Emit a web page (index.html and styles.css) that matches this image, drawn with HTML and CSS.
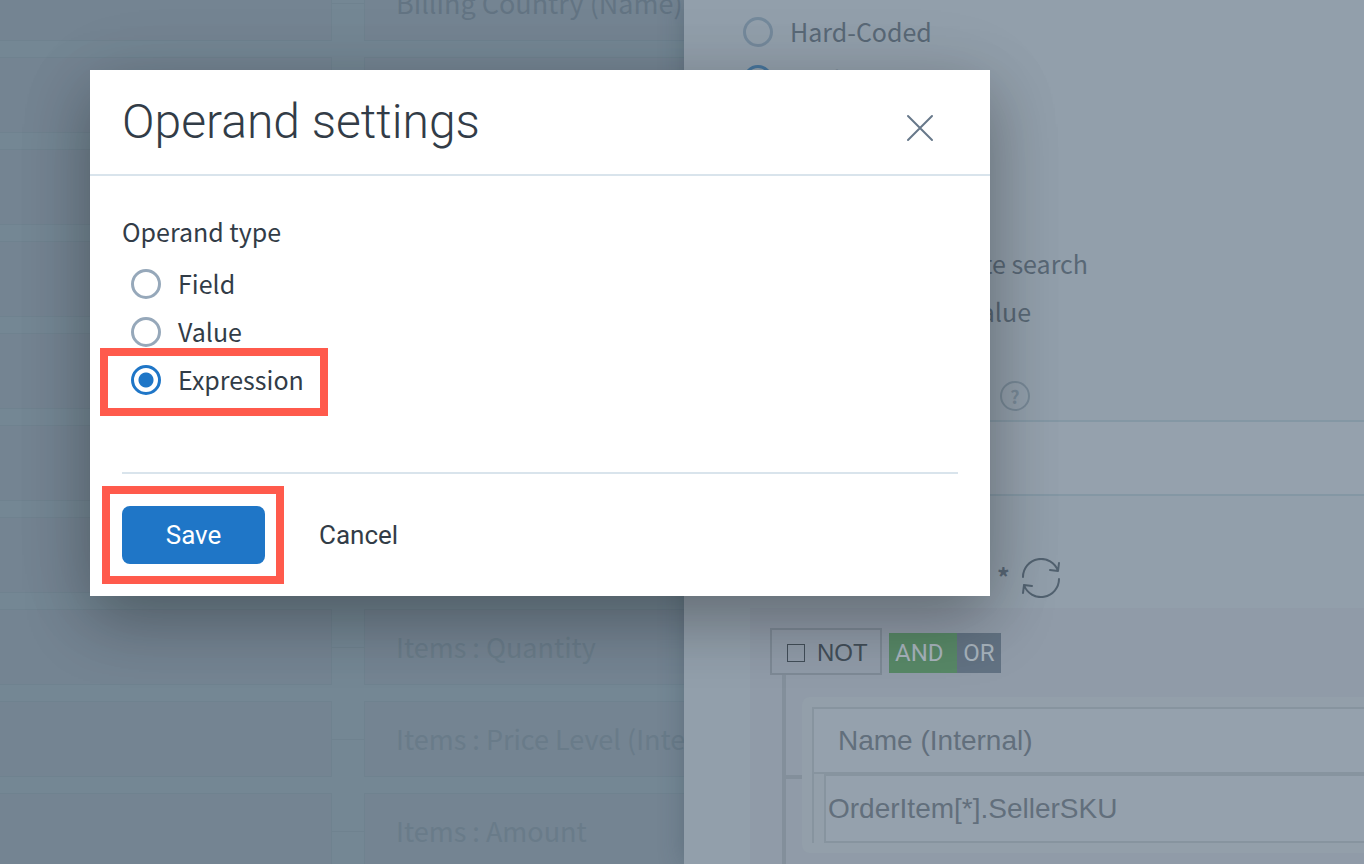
FILE: index.html
```html
<!DOCTYPE html>
<html lang="en">
<head>
    <meta charset="UTF-8">
    <meta name="viewport" content="width=device-width, initial-scale=1.0">
    <title>Operand settings</title>
    <link rel="stylesheet" href="styles.css">
</head>
<body>
    <div class="page">
        <div class="mapping">
            <div class="map-row"><div class="cell"></div><span class="link-line"></span><div class="cell strong">Billing Country (Name)</div></div>
            <div class="map-row"><div class="cell"></div><span class="link-line"></span><div class="cell"></div></div>
            <div class="map-row"><div class="cell"></div><span class="link-line"></span><div class="cell"></div></div>
            <div class="map-row"><div class="cell"></div><span class="link-line"></span><div class="cell"></div></div>
            <div class="map-row"><div class="cell"></div><span class="link-line"></span><div class="cell"></div></div>
            <div class="map-row"><div class="cell"></div><span class="link-line"></span><div class="cell"></div></div>
            <div class="map-row"><div class="cell"></div><span class="link-line"></span><div class="cell"></div></div>
            <div class="map-row"><div class="cell"></div><span class="link-line"></span><div class="cell">Items : Quantity</div></div>
            <div class="map-row"><div class="cell"></div><span class="link-line"></span><div class="cell">Items : Price Level (Internal)</div></div>
            <div class="map-row"><div class="cell"></div><span class="link-line"></span><div class="cell">Items : Amount</div></div>
        </div>

        <div class="panel">
            <div class="panel-options">
                <label class="radio"><input type="radio" name="source"><span>Hard-Coded</span></label>
                <label class="radio"><input type="radio" name="source" checked><span>Lookup</span></label>
            </div>
            <div class="panel-notes">
                <div class="note">Immediate search</div>
                <div class="note short">Null value</div>
            </div>
            <div class="field-label">
                <button class="help" type="button" aria-label="Help">?</button>
            </div>
            <input class="wide-input" type="text" aria-label="Lookup name">
            <div class="criteria-label">
                <span>*</span>
                <button class="refresh" type="button" aria-label="Refresh">
                    <svg width="40" height="40" viewBox="0 0 40 40" fill="none" stroke="currentColor" stroke-width="2" stroke-linecap="round" stroke-linejoin="round">
                        <path d="M2 19A18 18 0 0 1 37 13M38 5L37 13L29 12"/>
                        <path d="M38 21A18 18 0 0 1 3 27M2 35L3 27L11 28"/>
                    </svg>
                </button>
            </div>

            <div class="builder">
                <div class="logic">
                    <label class="not"><input type="checkbox"> NOT</label>
                    <div class="toggle">
                        <button class="and" type="button">AND</button>
                        <button class="or" type="button">OR</button>
                    </div>
                </div>
                <div class="tree">
                    <div class="branch"></div>
                    <div class="rule">
                        <div class="rule-inner">
                            <select class="rule-field" aria-label="Field">
                                <option>Name (Internal)</option>
                            </select>
                            <input class="rule-value" type="text" value="OrderItem[*].SellerSKU" aria-label="Value">
                        </div>
                    </div>
                </div>
            </div>
        </div>
    </div>

    <div class="modal" role="dialog" aria-labelledby="modal-title">
        <div class="modal-header">
            <h1 id="modal-title">Operand settings</h1>
            <button class="close" type="button" aria-label="Close">
                <svg width="28" height="28" viewBox="0 0 28 28" fill="none" stroke="currentColor" stroke-width="2" stroke-linecap="round">
                    <path d="M2 2L26 26M26 2L2 26"/>
                </svg>
            </button>
        </div>
        <div class="modal-body">
            <fieldset>
                <legend>Operand type</legend>
                <label class="radio"><input type="radio" name="operand"><span>Field</span></label>
                <label class="radio"><input type="radio" name="operand"><span>Value</span></label>
                <label class="radio marked"><input type="radio" name="operand" checked><span>Expression</span></label>
            </fieldset>
            <div class="actions">
                <div class="marked save-wrap"><button class="save" type="button">Save</button></div>
                <button class="cancel" type="button">Cancel</button>
            </div>
        </div>
    </div>
</body>
</html>
```
FILE: styles.css
```css
* {
    box-sizing: border-box;
}

body {
    margin: 0;
    height: 100vh;
    overflow: hidden;
    background: #748794;
    font-family: "Noto Sans CJK SC", "Noto Sans", sans-serif;
    font-size: 25px;
    line-height: 36px;
    color: #323c47;
}

button, input, select {
    font: inherit;
    color: inherit;
    margin: 0;
    padding: 0;
    border: none;
    background: none;
}

.page {
    display: grid;
    grid-template-columns: minmax(0, 171fr) minmax(0, 170fr);
    height: 100%;
}

/* mapping rows */
.mapping {
    display: flex;
    flex-direction: column;
    gap: 16px;
    margin-top: -35px;
    overflow: hidden;
    min-width: 0;
}

.map-row {
    display: grid;
    grid-template-columns: 332px 32px 400px;
    align-items: center;
    flex: none;
    height: 76px;
}

.cell {
    height: 76px;
    padding-left: 31px;
    border: 1px solid #6f828f;
    border-left-width: 0;
    background: #748492;
    font-size: 27px;
    line-height: 74px;
    white-space: nowrap;
    color: #697b89;
}

.cell:last-child {
    border-left-width: 1px;
}

.cell.strong {
    color: #637483;
}

.link-line {
    height: 1px;
    background: #6f828f;
}

/* right panel */
.panel {
    position: relative;
    background: #929fab;
    color: #596876;
    box-shadow: 0 0 24px rgba(40, 60, 75, 0.3);
}

.radio {
    position: relative;
    display: flex;
    align-items: center;
    gap: 17px;
    height: 48px;
}

.radio span {
    padding-bottom: 2px;
}

.radio input {
    appearance: none;
    flex: none;
    width: 30px;
    height: 30px;
    border: 3px solid #96a8ba;
    border-radius: 50%;
}

.radio input:checked {
    border-color: #1f76c7;
    background: radial-gradient(circle, #1f76c7 0 7px, transparent 8px);
}

.panel-options {
    padding: 8px 0 0 59px;
}

.panel-options .radio input {
    border-color: #74899b;
}

.panel-options .radio input:checked {
    border-color: #47759c;
}

.panel-notes {
    width: 404px;
    margin-top: 135px;
    text-align: right;
}

.note {
    height: 48px;
    line-height: 48px;
}

.note.short {
    padding-right: 57px;
}

.field-label {
    display: flex;
    height: 85px;
    padding: 46px 0 0 316px;
}

.help {
    width: 30px;
    height: 30px;
    border: 2px solid #778896;
    border-radius: 50%;
    font-size: 18px;
    font-weight: bold;
    line-height: 24px;
    color: #778896;
}

.wide-input {
    display: block;
    width: calc(100% - 66px);
    margin-left: 66px;
    height: 76px;
    border: 2px solid #8497a4;
    border-right: none;
    background: #95a1ad;
}

.criteria-label {
    display: flex;
    align-items: center;
    gap: 11px;
    height: 112px;
    padding: 52px 0 0 313px;
    font-weight: bold;
}

.criteria-label span {
    padding-bottom: 4px;
}

.refresh {
    height: 40px;
    color: #526270;
}

.refresh svg {
    display: block;
}

.builder {
    margin-left: 66px;
    padding: 20px 0 0 20px;
    height: 256px;
    background: #909ba8;
    font-family: "Liberation Sans", Arial, sans-serif;
}

.logic {
    display: flex;
    align-items: flex-end;
    gap: 7px;
    font-size: 24px;
    line-height: 40px;
}

.not {
    display: flex;
    align-items: center;
    gap: 12px;
    width: 112px;
    height: 47px;
    padding: 2px 0 0 15px;
    border: 2px solid #7d8995;
    color: #424e59;
}

.not input {
    appearance: none;
    width: 18px;
    height: 18px;
    border: 1px solid #424e59;
}

.toggle {
    display: flex;
    padding-bottom: 2px;
    font-family: Roboto, sans-serif;
    color: #a7b3bc;
}

.toggle button {
    height: 40px;
    padding: 0 6px;
}

.toggle .and {
    width: 68px;
    text-align: left;
    background: #588867;
}

.toggle .or {
    width: 44px;
    background: #627283;
}

.tree {
    display: flex;
    height: 189px;
    margin-left: 12px;
    border-left: 4px solid #838f9b;
}

.branch {
    width: 16px;
    height: 4px;
    margin-top: 100px;
    background: #838f9b;
}

.rule {
    flex: 1;
    height: 156px;
    margin-top: 22px;
    padding: 10px 0 0 10px;
    border-radius: 8px 0 0 8px;
    background: #939faa;
    font-size: 28px;
    color: #626f7c;
}

.rule-inner {
    height: 136px;
    border-top: 2px solid #87949f;
    border-left: 2px solid #87949f;
}

.rule-field {
    appearance: none;
    display: block;
    width: 100%;
    height: 65px;
    padding-left: 24px;
    background: #95a1ad;
    border-bottom: 2px solid #87949f;
}

.rule-value {
    display: block;
    width: calc(100% - 10px);
    height: 69px;
    margin-left: 10px;
    padding-left: 2px;
    border: 2px solid #87949f;
    border-right: none;
    background: #95a1ad;
}

/* modal */
.modal {
    position: absolute;
    top: 70px;
    left: 90px;
    width: calc(100% - 180px);
    max-width: 900px;
    background: #fff;
    box-shadow: 0 24px 60px rgba(0, 0, 0, 0.28), 0 8px 80px rgba(0, 0, 0, 0.08);
}

.modal-header {
    display: flex;
    justify-content: space-between;
    height: 106px;
    padding: 22px 56px 0 32px;
    border-bottom: 2px solid #d9e4ec;
}

.modal-header h1 {
    margin: 0;
    font-family: Roboto, sans-serif;
    font-size: 48px;
    font-weight: 300;
    line-height: 60px;
}

.close {
    height: 28px;
    margin-top: 22px;
    color: #67788a;
}

.close svg {
    display: block;
}

.modal-body {
    padding: 37px 32px 32px;
}

fieldset {
    margin: 0;
    padding: 0 0 68px 9px;
    border: none;
}

legend {
    margin-left: -9px;
    padding: 0 0 11px;
}

.actions {
    display: flex;
    gap: 54px;
    padding-top: 32px;
    border-top: 2px solid #d9e4ec;
    font-family: Roboto, sans-serif;
    font-size: 26px;
}

.save {
    display: block;
    width: 143px;
    height: 58px;
    border-radius: 8px;
    background: #1f76c7;
    color: #fff;
}

/* red callout boxes */
.marked {
    position: relative;
}

.marked::after {
    content: "";
    position: absolute;
    border: 8px solid #ff5a4c;
}

.radio.marked {
    width: 166px;
}

.radio.marked::after {
    inset: -8px -31px -12px -31px;
}

.save-wrap::after {
    inset: -20px -19px -20px -20px;
}
```
